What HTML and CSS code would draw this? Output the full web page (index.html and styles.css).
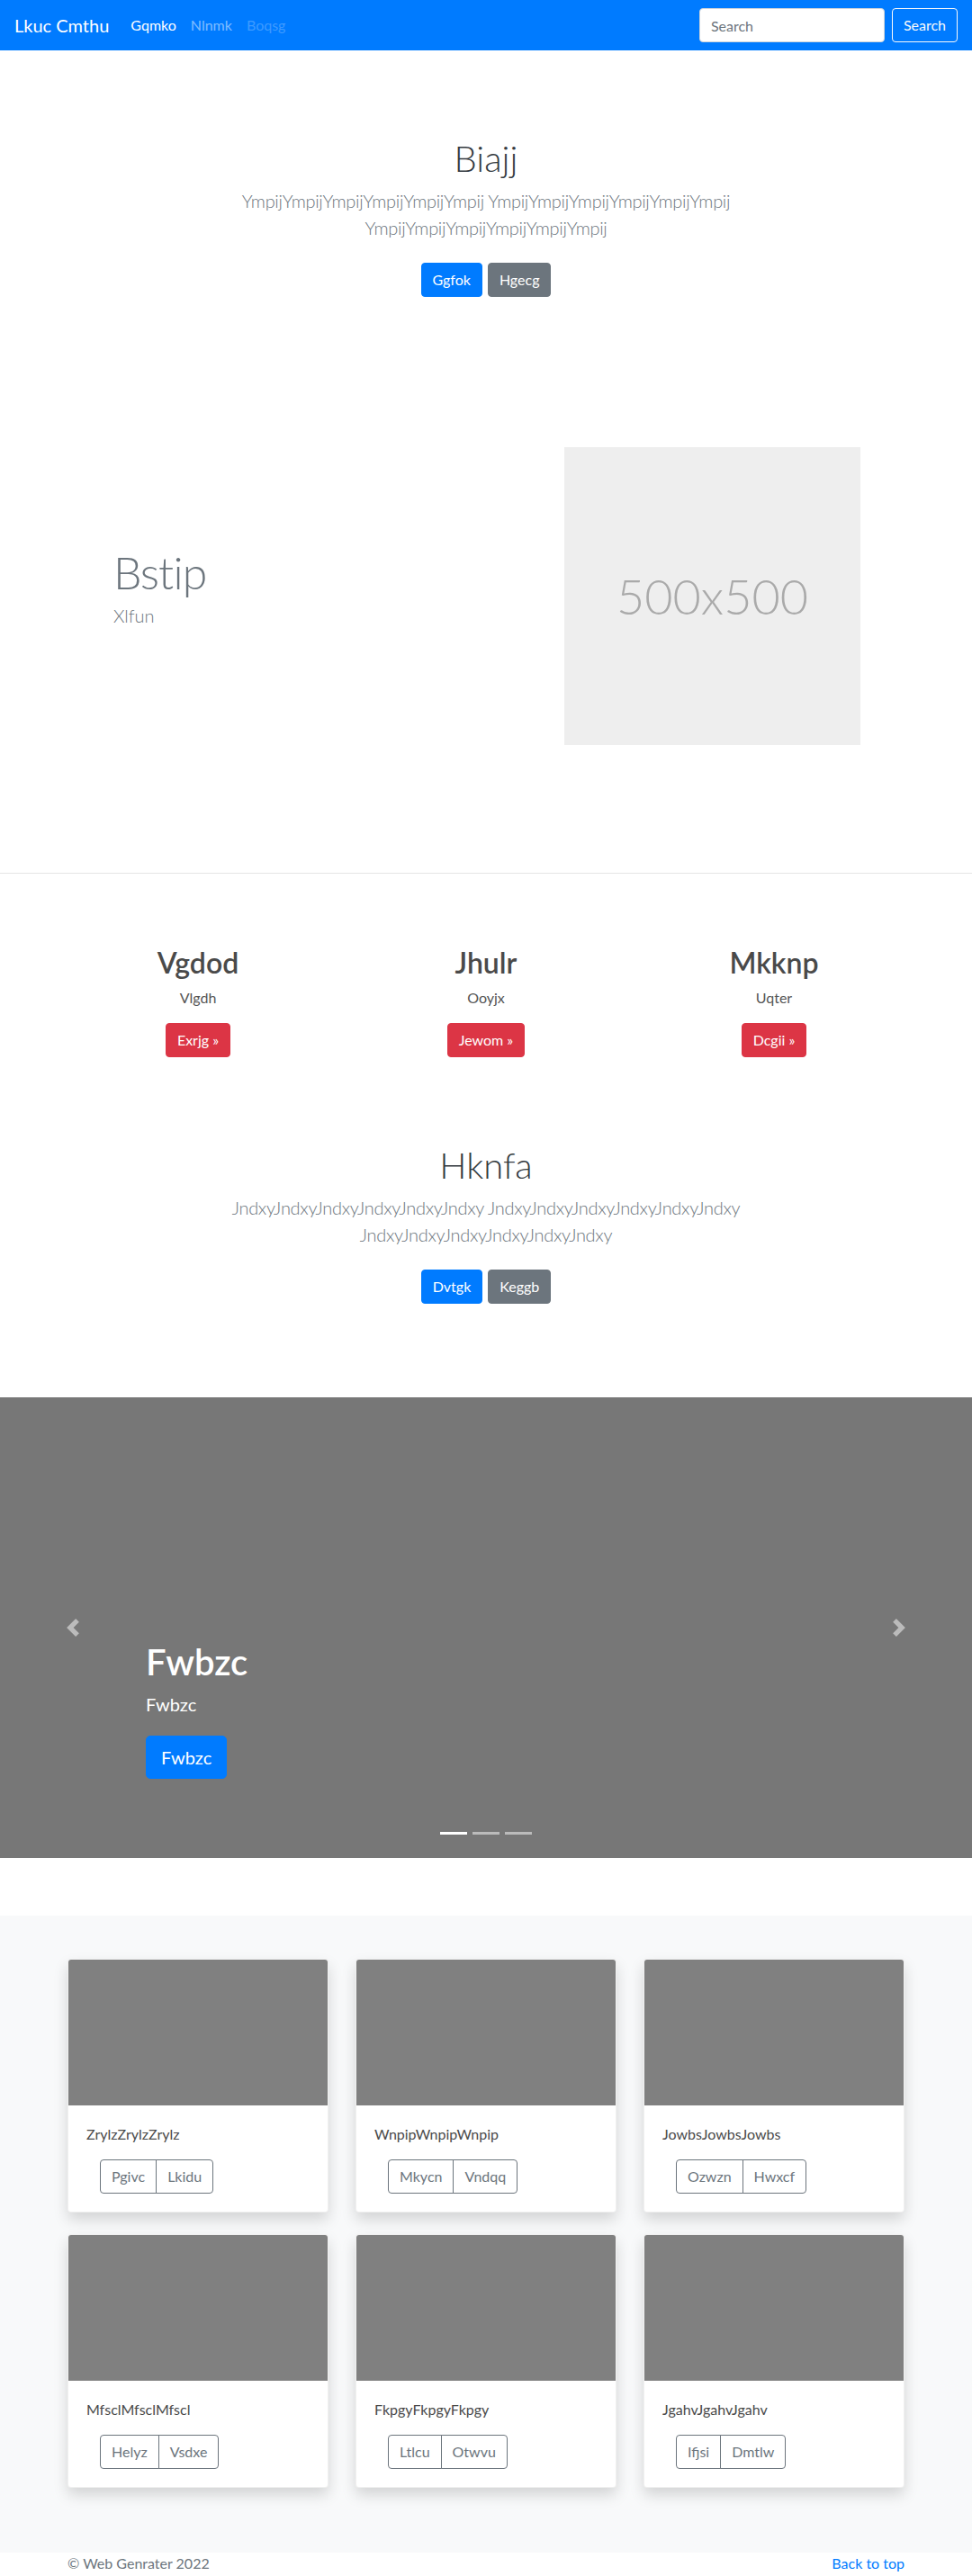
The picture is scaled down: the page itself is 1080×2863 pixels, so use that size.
FILE: index.html
```html
<!DOCTYPE html>
<html lang="en">
<head>
<meta charset="utf-8">
<title>Lkuc Cmthu</title>
<link rel="stylesheet" href="styles.css">
</head>
<body>
<nav class="navbar">
  <a class="brand" href="#">Lkuc Cmthu</a>
  <ul class="nav">
    <li><a class="nav-link active" href="#">Gqmko</a></li>
    <li><a class="nav-link" href="#">Nlnmk</a></li>
    <li><a class="nav-link disabled" href="#">Boqsg</a></li>
  </ul>
  <form class="search">
    <input class="search-input" type="text" placeholder="Search">
    <button class="btn btn-outline-light" type="button">Search</button>
  </form>
</nav>

<section class="jumbo">
  <h1 class="jumbo-title">Biajj</h1>
  <p class="lead">YmpijYmpijYmpijYmpijYmpijYmpij YmpijYmpijYmpijYmpijYmpijYmpij YmpijYmpijYmpijYmpijYmpijYmpij</p>
  <p class="actions"><a class="btn btn-primary" href="#">Ggfok</a><a class="btn btn-secondary" href="#">Hgecg</a></p>
</section>

<section class="featurette">
  <div class="feat-text">
    <h2 class="feat-title">Bstip</h2>
    <p class="feat-lead">Xlfun</p>
  </div>
  <div class="placeholder">500x500</div>
</section>

<hr class="divider">

<section class="marketing">
  <div class="mk-col">
    <h2 class="mk-title">Vgdod</h2>
    <p class="mk-text">Vlgdh</p>
    <p class="mk-action"><a class="btn btn-danger" href="#">Exrjg &raquo;</a></p>
  </div>
  <div class="mk-col">
    <h2 class="mk-title">Jhulr</h2>
    <p class="mk-text">Ooyjx</p>
    <p class="mk-action"><a class="btn btn-danger" href="#">Jewom &raquo;</a></p>
  </div>
  <div class="mk-col">
    <h2 class="mk-title">Mkknp</h2>
    <p class="mk-text">Uqter</p>
    <p class="mk-action"><a class="btn btn-danger" href="#">Dcgii &raquo;</a></p>
  </div>
</section>

<section class="jumbo">
  <h1 class="jumbo-title">Hknfa</h1>
  <p class="lead">JndxyJndxyJndxyJndxyJndxyJndxy JndxyJndxyJndxyJndxyJndxyJndxy JndxyJndxyJndxyJndxyJndxyJndxy</p>
  <p class="actions"><a class="btn btn-primary" href="#">Dvtgk</a><a class="btn btn-secondary" href="#">Keggb</a></p>
</section>

<section class="carousel">
  <ol class="indicators">
    <li class="active"></li>
    <li></li>
    <li></li>
  </ol>
  <div class="carousel-caption">
    <h1 class="caption-title">Fwbzc</h1>
    <p class="caption-text">Fwbzc</p>
    <p class="caption-action"><a class="btn btn-lg btn-primary" href="#">Fwbzc</a></p>
  </div>
  <a class="control prev" href="#"><svg viewBox="0 0 8 8" width="20" height="20"><path fill="#fff" d="M5.25 0l-4 4 4 4 1.5-1.5L4.25 4l2.5-2.5L5.25 0z"/></svg></a>
  <a class="control next" href="#"><svg viewBox="0 0 8 8" width="20" height="20"><path fill="#fff" d="M2.75 0l-1.5 1.5L3.75 4l-2.5 2.5L2.75 8l4-4-4-4z"/></svg></a>
</section>

<section class="album">
  <div class="album-grid">
    <div class="card">
      <div class="card-img"></div>
      <div class="card-body">
        <p class="card-text">ZrylzZrylzZrylz</p>
        <div class="btn-group"><a class="btn btn-outline" href="#">Pgivc</a><a class="btn btn-outline" href="#">Lkidu</a></div>
      </div>
    </div>
    <div class="card">
      <div class="card-img"></div>
      <div class="card-body">
        <p class="card-text">WnpipWnpipWnpip</p>
        <div class="btn-group"><a class="btn btn-outline" href="#">Mkycn</a><a class="btn btn-outline" href="#">Vndqq</a></div>
      </div>
    </div>
    <div class="card">
      <div class="card-img"></div>
      <div class="card-body">
        <p class="card-text">JowbsJowbsJowbs</p>
        <div class="btn-group"><a class="btn btn-outline" href="#">Ozwzn</a><a class="btn btn-outline" href="#">Hwxcf</a></div>
      </div>
    </div>
    <div class="card">
      <div class="card-img"></div>
      <div class="card-body">
        <p class="card-text">MfsclMfsclMfscl</p>
        <div class="btn-group"><a class="btn btn-outline" href="#">Helyz</a><a class="btn btn-outline" href="#">Vsdxe</a></div>
      </div>
    </div>
    <div class="card">
      <div class="card-img"></div>
      <div class="card-body">
        <p class="card-text">FkpgyFkpgyFkpgy</p>
        <div class="btn-group"><a class="btn btn-outline" href="#">Ltlcu</a><a class="btn btn-outline" href="#">Otwvu</a></div>
      </div>
    </div>
    <div class="card">
      <div class="card-img"></div>
      <div class="card-body">
        <p class="card-text">JgahvJgahvJgahv</p>
        <div class="btn-group"><a class="btn btn-outline" href="#">Ifjsi</a><a class="btn btn-outline" href="#">Dmtlw</a></div>
      </div>
    </div>
  </div>
</section>

<footer class="footer">
  <p class="copy">&copy; Web Genrater 2022</p>
  <a class="to-top" href="#">Back to top</a>
</footer>
</body>
</html>
```

FILE: styles.css
```css
* { box-sizing: border-box; }

body {
  margin: 0;
  font-family: Lato, "Segoe UI", "Open Sans", sans-serif;
  font-size: 16px;
  line-height: 1.5;
  color: #212529;
  background: #fff;
}

a { text-decoration: none; }

/* Navbar */
.navbar {
  display: flex;
  align-items: center;
  height: 56px;
  padding: 0 16px;
  background: #007bff;
}
.brand {
  font-size: 20px;
  line-height: 30px;
  color: #fff;
  margin-right: 16px;
}
.nav {
  display: flex;
  flex: 1;
  list-style: none;
  margin: 0;
  padding: 0;
}
.nav-link {
  display: block;
  padding: 8px;
  color: rgba(255, 255, 255, 0.5);
}
.nav-link.active { color: #fff; }
.nav-link.disabled { color: rgba(255, 255, 255, 0.25); }
.search {
  display: flex;
  align-items: center;
  gap: 8px;
  margin: 0;
}
.search-input {
  width: 206px;
  height: 38px;
  padding: 6px 12px;
  font-family: inherit;
  font-size: 16px;
  color: #495057;
  background: #fff;
  border: 1px solid #ced4da;
  border-radius: 4px;
}
.search-input::placeholder { color: #6c757d; }

/* Buttons */
.btn {
  display: inline-block;
  font-family: inherit;
  font-size: 16px;
  line-height: 24px;
  padding: 6px 12px;
  border: 1px solid transparent;
  border-radius: 4px;
  text-align: center;
  white-space: nowrap;
  cursor: pointer;
}
.btn-outline-light { background: transparent; color: #f8f9fa; border-color: #f8f9fa; }
.btn-primary { background: #007bff; border-color: #007bff; color: #fff; }
.btn-secondary { background: #6c757d; border-color: #6c757d; color: #fff; }
.btn-danger { background: #dc3545; border-color: #dc3545; color: #fff; }
.btn-lg { font-size: 20px; line-height: 30px; padding: 8px 16px; border-radius: 5px; }
.btn-outline { background: transparent; color: #6c757d; border-color: #6c757d; }

/* Jumbotron */
.jumbo {
  text-align: center;
  padding: 96px 0;
}
.jumbo-title {
  margin: 0 0 8px;
  font-size: 40px;
  line-height: 48px;
  font-weight: 300;
  color: #343a40;
}
.lead {
  max-width: 700px;
  margin: 0 auto 16px;
  font-size: 20px;
  line-height: 30px;
  font-weight: 300;
  letter-spacing: -0.3px;
  color: #6c757d;
}
.actions {
  display: flex;
  justify-content: center;
  gap: 6px;
  margin: 0;
  padding: 8px 0;
}

/* Featurette */
.featurette {
  display: grid;
  grid-template-columns: 1fr 329px;
  align-items: center;
  width: 960px;
  margin: 0 auto;
  padding: 63px 64px 62px 0;
}
.feat-text { padding-left: 66px; }
.feat-title {
  margin: 0 0 8px;
  font-size: 50px;
  line-height: 1;
  font-weight: 300;
  letter-spacing: -0.8px;
  color: #6c757d;
}
.feat-lead {
  margin: 0 0 16px;
  font-size: 20px;
  line-height: 30px;
  font-weight: 300;
  color: #6c757d;
}
.placeholder {
  height: 331px;
  display: flex;
  align-items: center;
  justify-content: center;
  background: #eee;
  color: #aaa;
  font-size: 54px;
  font-weight: 300;
}

.divider {
  margin: 80px 0;
  border: 0;
  border-top: 1px solid rgba(0, 0, 0, 0.1);
}

/* Marketing columns */
.marketing {
  display: grid;
  grid-template-columns: repeat(3, 1fr);
  width: 960px;
  margin: 0 auto;
  text-align: center;
}
.mk-col { padding: 0 15px; }
.mk-title {
  margin: 0 0 8px;
  font-size: 32px;
  line-height: 1.2;
  font-weight: 600;
  color: #4a4a4a;
}
.mk-text { margin: 0 0 16px; color: #555; }
.mk-action { margin: 0; }

/* Carousel */
.carousel {
  position: relative;
  height: 512px;
  margin-bottom: 64px;
  background: #777;
  overflow: hidden;
}
.carousel-caption {
  position: absolute;
  left: 15%;
  right: 15%;
  bottom: 48px;
  padding: 20px 0;
  color: #fff;
  text-align: left;
  z-index: 10;
}
.caption-title {
  margin: 0 0 8px;
  font-size: 40px;
  line-height: 1.2;
  font-weight: 600;
}
.caption-text {
  margin: 0 0 20px;
  font-size: 20px;
  line-height: 30px;
}
.caption-action {
  margin: 0 0 20px;
  font-size: 20px;
  line-height: 30px;
}
.control {
  position: absolute;
  top: 0;
  bottom: 0;
  width: 15%;
  display: flex;
  align-items: center;
  justify-content: center;
  opacity: 0.5;
}
.control.prev { left: 0; }
.control.next { right: 0; }
.indicators {
  position: absolute;
  left: 0;
  right: 0;
  bottom: 0;
  display: flex;
  justify-content: center;
  margin: 0 0 16px;
  padding: 0;
  list-style: none;
  z-index: 15;
}
.indicators li {
  width: 30px;
  height: 3px;
  margin: 10px 3px;
  background: #fff;
  opacity: 0.5;
}
.indicators li.active { opacity: 1; }

/* Album */
.album {
  background: #f8f9fa;
  padding: 48px 0 72px;
}
.album-grid {
  display: grid;
  grid-template-columns: repeat(3, 1fr);
  column-gap: 30px;
  row-gap: 24px;
  width: 960px;
  margin: 0 auto;
  padding: 0 15px;
}
.card {
  background: #fff;
  border: 1px solid rgba(0, 0, 0, 0.06);
  border-radius: 4px;
  box-shadow: 0 8px 16px rgba(0, 0, 0, 0.15);
  overflow: hidden;
}
.card-img {
  height: 162px;
  background: #808080;
}
.card-body { padding: 20px; }
.card-text { margin: 0 0 16px; color: #4a4a4a; }
.btn-group {
  display: inline-flex;
  margin-left: 15px;
}
.btn-group .btn + .btn {
  margin-left: -1px;
  border-top-left-radius: 0;
  border-bottom-left-radius: 0;
}
.btn-group .btn:first-child {
  border-top-right-radius: 0;
  border-bottom-right-radius: 0;
}

/* Footer */
.footer {
  display: flex;
  justify-content: space-between;
  width: 960px;
  margin: 0 auto;
  padding: 0 15px;
  line-height: 24px;
  color: #6c757d;
}
.copy { margin: 0; }
.to-top { color: #007bff; }
```
